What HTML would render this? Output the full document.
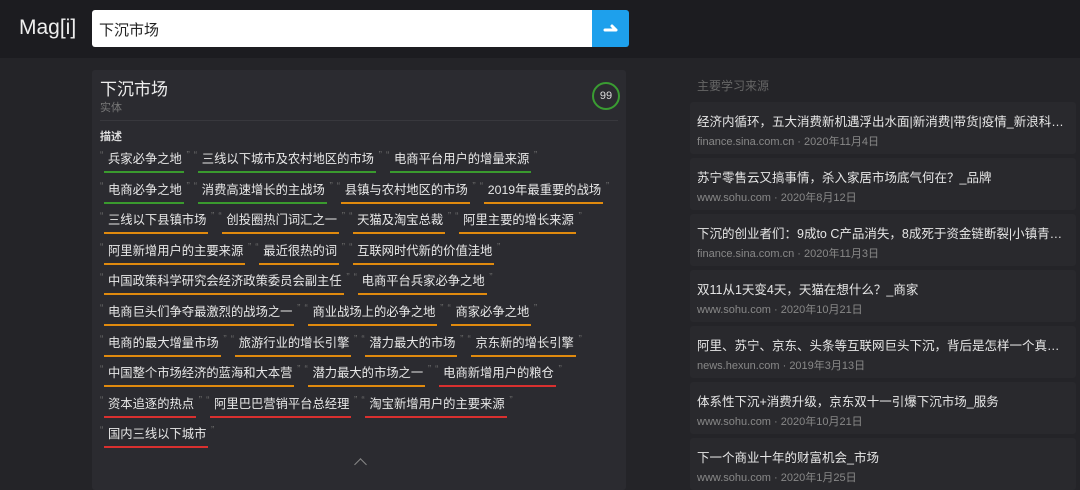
<!DOCTYPE html><html><head><meta charset="utf-8"><style>
*{margin:0;padding:0;box-sizing:border-box}
body{width:1080px;height:483px;overflow:hidden;background:#242428;font-family:"Liberation Sans","Noto Sans CJK SC",sans-serif;color:#ddd}
.hd{position:absolute;left:0;top:0;width:1080px;height:58px;background:#1c1c20}
.logo{position:absolute;left:19px;top:16px;font-size:21px;color:#eee}
.sb{position:absolute;left:92px;top:10px;width:500px;height:37px;background:#fff;border-radius:3px 0 0 3px;color:#222;font-size:15px;padding:9px 7px}
.btn{position:absolute;left:592px;top:10px;width:37px;height:37px;background:#1ea0ec;border-radius:0 3px 3px 0}
.card{position:absolute;left:92px;top:70px;width:534px;height:420px;background:#2b2b30;border-radius:3px}
.t{position:absolute;left:8px;top:5px;font-size:17px;color:#eee}
.st{position:absolute;left:8px;top:29px;font-size:11px;color:#777}
.c99{position:absolute;left:500px;top:12px;width:28px;height:28px;border:2px solid #3a9c32;border-radius:50%;font-size:11px;text-align:center;line-height:24px;color:#ddd}
.hr{position:absolute;left:8px;right:8px;top:50px;border-top:1px solid #38383d}
.ms{position:absolute;left:8px;top:58px;font-size:11px;color:#ddd;font-weight:bold}
.tags{position:absolute;left:8px;top:79px;width:520px}
.row{height:30.6px;white-space:nowrap}
.tg{display:inline-block;position:relative;font-size:12.3px;color:#e8e8e8;padding:0 8px 0 8px;margin-right:4px;line-height:20px}
.tg:before{content:"\201C";position:absolute;left:0;top:-3px;color:#666;font-size:10px}
.tg:after{content:"\201D";position:absolute;right:0;top:-3px;color:#666;font-size:10px}
.tg i{position:absolute;left:4px;right:6px;bottom:-4px;height:2px}
.g i{background:#3a9a2e}.o i{background:#e08a0e}.r i{background:#d9302f}
.chev{position:absolute;left:264px;top:390px;width:9px;height:9px;border-left:1px solid #888;border-top:1px solid #888;transform:rotate(45deg)}
.rh{position:absolute;left:697px;top:77px;font-size:12px;color:#666}
.it{position:absolute;left:690px;width:386px;height:52px;background:#29292d;border-radius:3px;padding:9px 7px}
.it b{display:block;font-weight:normal;font-size:12.5px;color:#e6e6e6;white-space:nowrap;overflow:hidden;text-overflow:ellipsis}
.it s{display:block;text-decoration:none;font-size:11px;color:#888;margin-top:3px}
</style></head><body>
<div class="hd"><div class="logo">Mag[i]</div><div class="sb">下沉市场</div><div class="btn"><svg width="37" height="37"><path d="M13 20H24M24 20L20 16" stroke="#fff" stroke-width="3" fill="none" stroke-linecap="round"/></svg></div></div>
<div class="card"><div class="t">下沉市场</div><div class="st">实体</div><div class="c99">99</div><div class="hr"></div><div class="ms">描述</div>
<div class="tags">
<div class="row"><span class="tg g">兵家必争之地<i></i></span><span class="tg g">三线以下城市及农村地区的市场<i></i></span><span class="tg g">电商平台用户的增量来源<i></i></span></div>
<div class="row"><span class="tg g">电商必争之地<i></i></span><span class="tg g">消费高速增长的主战场<i></i></span><span class="tg o">县镇与农村地区的市场<i></i></span><span class="tg o">2019年最重要的战场<i></i></span></div>
<div class="row"><span class="tg o">三线以下县镇市场<i></i></span><span class="tg o">创投圈热门词汇之一<i></i></span><span class="tg o">天猫及淘宝总裁<i></i></span><span class="tg o">阿里主要的增长来源<i></i></span></div>
<div class="row"><span class="tg o">阿里新增用户的主要来源<i></i></span><span class="tg o">最近很热的词<i></i></span><span class="tg o">互联网时代新的价值洼地<i></i></span></div>
<div class="row"><span class="tg o">中国政策科学研究会经济政策委员会副主任<i></i></span><span class="tg o">电商平台兵家必争之地<i></i></span></div>
<div class="row"><span class="tg o">电商巨头们争夺最激烈的战场之一<i></i></span><span class="tg o">商业战场上的必争之地<i></i></span><span class="tg o">商家必争之地<i></i></span></div>
<div class="row"><span class="tg o">电商的最大增量市场<i></i></span><span class="tg o">旅游行业的增长引擎<i></i></span><span class="tg o">潜力最大的市场<i></i></span><span class="tg o">京东新的增长引擎<i></i></span></div>
<div class="row"><span class="tg o">中国整个市场经济的蓝海和大本营<i></i></span><span class="tg o">潜力最大的市场之一<i></i></span><span class="tg r">电商新增用户的粮仓<i></i></span></div>
<div class="row"><span class="tg r">资本追逐的热点<i></i></span><span class="tg r">阿里巴巴营销平台总经理<i></i></span><span class="tg r">淘宝新增用户的主要来源<i></i></span></div>
<div class="row"><span class="tg r">国内三线以下城市<i></i></span></div>
</div><div class="chev"></div></div>
<div class="rh">主要学习来源</div>
<div class="it" style="top:102px"><b>经济内循环，五大消费新机遇浮出水面|新消费|带货|疫情_新浪科技_新浪网</b><s>finance.sina.com.cn · 2020年11月4日</s></div>
<div class="it" style="top:158px"><b>苏宁零售云又搞事情，杀入家居市场底气何在？_品牌</b><s>www.sohu.com · 2020年8月12日</s></div>
<div class="it" style="top:214px"><b>下沉的创业者们：9成to C产品消失，8成死于资金链断裂|小镇青年|下沉市场</b><s>finance.sina.com.cn · 2020年11月3日</s></div>
<div class="it" style="top:270px"><b>双11从1天变4天，天猫在想什么？_商家</b><s>www.sohu.com · 2020年10月21日</s></div>
<div class="it" style="top:326px"><b>阿里、苏宁、京东、头条等互联网巨头下沉，背后是怎样一个真实的下沉市场</b><s>news.hexun.com · 2019年3月13日</s></div>
<div class="it" style="top:382px"><b>体系性下沉+消费升级，京东双十一引爆下沉市场_服务</b><s>www.sohu.com · 2020年10月21日</s></div>
<div class="it" style="top:438px"><b>下一个商业十年的财富机会_市场</b><s>www.sohu.com · 2020年1月25日</s></div>
</body></html>
